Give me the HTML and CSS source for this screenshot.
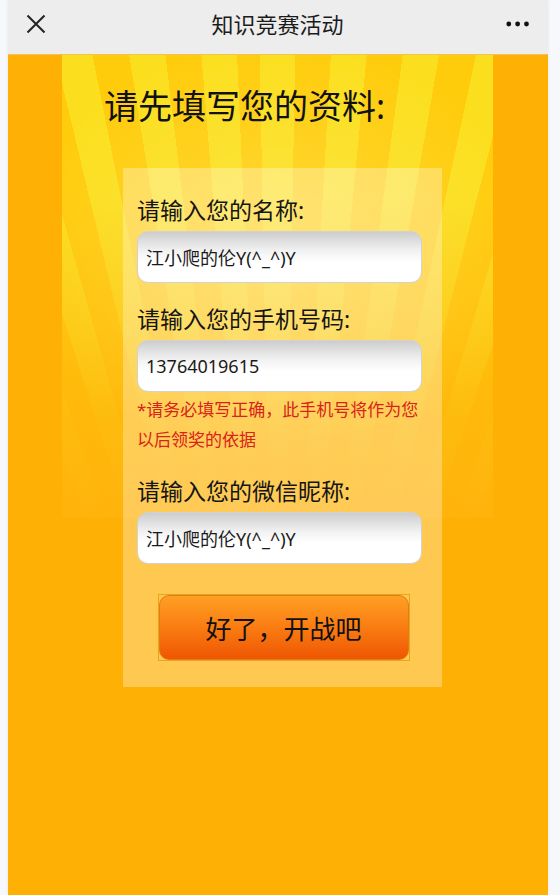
FILE: index.html
```html
<!DOCTYPE html>
<html lang="zh-CN">
<head>
<meta charset="utf-8">
<title>知识竞赛活动</title>
<link rel="stylesheet" href="styles.css">
</head>
<body>
<div class="phone">
  <header class="topbar">
    <span class="icon-close">
      <svg width="20" height="20" viewBox="0 0 20 20"><path d="M1.5 1.5 L18.5 18.5 M18.5 1.5 L1.5 18.5" stroke="#222" stroke-width="2" fill="none"/></svg>
    </span>
    <h1 class="title">知识竞赛活动</h1>
    <span class="icon-more">
      <svg width="26" height="6" viewBox="0 0 26 6"><circle cx="3" cy="3" r="2.6" fill="#111"/><circle cx="12.6" cy="3" r="2.6" fill="#111"/><circle cx="22.2" cy="3" r="2.6" fill="#111"/></svg>
    </span>
  </header>
  <main class="stage">
    <h2 class="heading">请先填写您的资料:</h2>
    <form class="card">
      <label class="label">请输入您的名称:</label>
      <input class="field" type="text" value="江小爬的伦Y(^_^)Y">
      <label class="label">请输入您的手机号码:</label>
      <input class="field field-tight" type="text" value="13764019615">
      <p class="note">*请务必填写正确，此手机号将作为您以后领奖的依据</p>
      <label class="label">请输入您的微信昵称:</label>
      <input class="field" type="text" value="江小爬的伦Y(^_^)Y">
      <button class="go" type="button"><span class="go-face">好了，开战吧</span></button>
    </form>
  </main>
</div>
</body>
</html>
```
FILE: styles.css
```css
html, body {
  margin: 0;
  padding: 0;
  background: #f7f8fc;
}
body {
  padding-left: 8px;
  font-family: "Noto Sans", "Noto Sans CJK SC", sans-serif;
}
.phone {
  width: 540px;
  min-height: 895px;
  display: flex;
  flex-direction: column;
  box-shadow: 0 0 3px rgba(0, 0, 0, 0.08);
}
.topbar {
  height: 55px;
  box-sizing: border-box;
  padding: 0 18px 7px 17px;
  background: #ededed;
  border-bottom: 1px solid #f2c25a;
  display: flex;
  align-items: center;
  justify-content: space-between;
}
.icon-close, .icon-more {
  width: 26px;
  display: flex;
  align-items: center;
}
.icon-close svg { display: block; margin-left: 1px; }
.icon-more svg { display: block; margin-left: 2px; }
.title {
  margin: 0;
  font-size: 22px;
  font-weight: normal;
  color: #1b1b1b;
  line-height: 30px;
}
.stage {
  flex: 1;
  background:
    radial-gradient(ellipse 60% 45% at 50% 42%, rgba(255, 236, 120, 0.4), rgba(255, 236, 120, 0) 100%) 54px 0 / 431px 463px no-repeat,
    linear-gradient(to bottom, rgba(255, 179, 10, 0) 0%, rgba(255, 179, 10, 0) 30%, rgba(255, 179, 10, 0.8) 78%, #ffb30c 100%) 54px 0 / 431px 463px no-repeat,
    repeating-conic-gradient(from -1.1deg at 50% 200%, #fbdf1e 0deg 2.2deg, #ffcc0c 2.2deg 4.4deg) 54px 0 / 431px 463px no-repeat,
    #ffb005;
  padding-top: 31px;
}
.heading {
  margin: 0 0 42px 96px;
  font-size: 34px;
  line-height: 40px;
  font-weight: normal;
  color: #111;
}
.card {
  margin-left: 115px;
  width: 319px;
  box-sizing: border-box;
  padding: 26px 20px 26px 14px;
  background: rgba(255, 255, 255, 0.3);
  display: flex;
  flex-direction: column;
}
.label {
  font-size: 23px;
  line-height: 32px;
  color: #151515;
  margin-bottom: 5px;
}
.field {
  height: 52px;
  box-sizing: border-box;
  margin: 0 0 20px 0;
  padding: 0 8px;
  border: 1px solid #d2d2d2;
  border-radius: 11px;
  background: linear-gradient(to bottom, #cdcdcd 0%, #f2f2f2 38%, #ffffff 60%, #ffffff 100%);
  font-family: "Noto Sans", "Noto Sans CJK SC", sans-serif;
  font-size: 18px;
  color: #1a1a1a;
  outline: none;
}
.field-tight {
  margin-bottom: 3px;
}
.note {
  margin: 0 0 20px 0;
  font-size: 17px;
  line-height: 30px;
  color: #d9231a;
}
.go {
  align-self: center;
  margin: 10px 0 0 8px;
  width: 252px;
  height: 67px;
  padding: 0;
  border: 1px solid #eda41c;
  background: transparent;
  cursor: pointer;
}
.go-face {
  display: flex;
  align-items: center;
  justify-content: center;
  height: 100%;
  border-radius: 10px;
  border: 1px solid #e47a12;
  box-sizing: border-box;
  background: linear-gradient(to bottom, #ffa024 0%, #fa8014 45%, #ef5602 100%);
  font-family: "Noto Sans", "Noto Sans CJK SC", sans-serif;
  font-size: 26px;
  color: #111;
  letter-spacing: 0;
}
```
